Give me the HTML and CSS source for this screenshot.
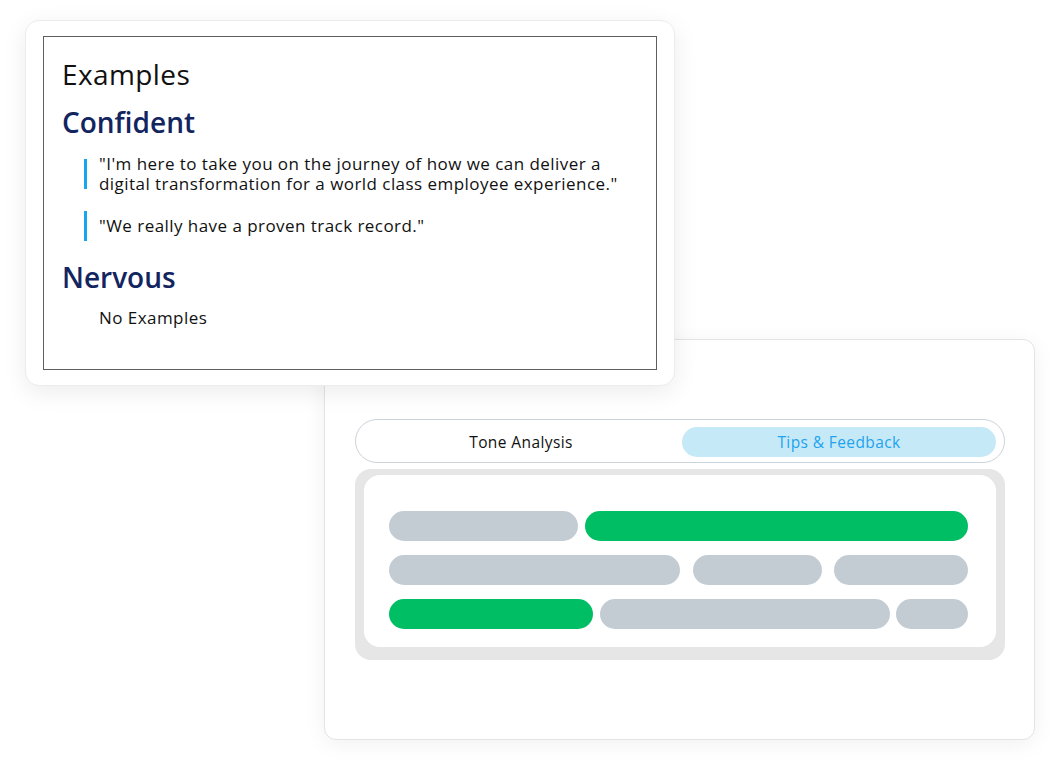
FILE: index.html
```html
<!DOCTYPE html>
<html>
<head>
<meta charset="utf-8">
<link rel="stylesheet" href="styles.css">
</head>
<body>
<div class="canvas">
  <div class="card back">
    <div class="tabs">
      <div class="tab">Tone Analysis</div>
      <div class="tab active">Tips &amp; Feedback</div>
    </div>
    <div class="panel">
      <div class="panel-inner">
        <div class="row">
          <span class="bar grey" style="width:189px"></span>
          <span class="bar green" style="width:383px"></span>
        </div>
        <div class="row">
          <span class="bar grey" style="width:291px"></span>
          <span class="bar grey" style="width:129px"></span>
          <span class="bar grey" style="width:134px"></span>
        </div>
        <div class="row">
          <span class="bar green" style="width:204px"></span>
          <span class="bar grey" style="width:290px"></span>
          <span class="bar grey" style="width:72px"></span>
        </div>
      </div>
    </div>
  </div>
  <div class="card front">
    <div class="box">
      <h1 class="title">Examples</h1>
      <h2 class="cat">Confident</h2>
      <blockquote class="quote"><span class="qtext">"I'm here to take you on the journey of how we can deliver a digital transformation for a world class employee experience."</span></blockquote>
      <blockquote class="quote"><span class="qtext">"We really have a proven track record."</span></blockquote>
      <h2 class="cat nerv">Nervous</h2>
      <p class="none">No Examples</p>
    </div>
  </div>
</div>
</body>
</html>
```

FILE: styles.css
```css
html, body {
  margin: 0;
  padding: 0;
  background: #ffffff;
}
body {
  font-family: "Open Sans", "Noto Sans", sans-serif;
  color: #111;
}
.canvas {
  position: relative;
  width: 1056px;
  height: 764px;
  overflow: hidden;
}
.card {
  position: absolute;
  background: #fff;
  box-sizing: border-box;
}
.front {
  left: 25px;
  top: 20px;
  width: 650px;
  height: 366px;
  border-radius: 14px;
  border: 1px solid #ececec;
  box-shadow: 0 6px 24px rgba(0,0,0,0.08);
  padding: 15px 17px 15px 17px;
}
.back {
  left: 324px;
  top: 339px;
  width: 711px;
  height: 401px;
  border-radius: 12px;
  border: 1px solid #e4e4e4;
  box-shadow: 0 4px 22px rgba(0,0,0,0.06);
  padding: 79px 29px 0 30px;
}
.box {
  border: 1px solid #5e5e5e;
  height: 100%;
  box-sizing: border-box;
  padding: 20px 18px 0 18px;
}
.title {
  margin: 0;
  font-size: 28px;
  font-weight: 400;
  letter-spacing: 0.4px;
  line-height: 34px;
  color: #111;
}
.cat {
  margin: 14px 0 0 0;
  font-size: 28px;
  font-weight: 600;
  line-height: 34px;
  color: #13255f;
}
.cat.nerv {
  margin-top: 19px;
}
.quote {
  display: flex;
  align-items: center;
  margin: 15px 0 0 22px;
  padding: 0;
  min-height: 30px;
  font-size: 17px;
  letter-spacing: 0.45px;
  line-height: 20px;
  color: #111;
  max-width: 555px;
}
.quote::before {
  content: "";
  flex: none;
  width: 3px;
  height: 30px;
  background: #17a5ee;
  margin-right: 12px;
}
.quote + .quote {
  margin-top: 17px;
}
.none {
  margin: 14px 0 0 37px;
  font-size: 17px;
  letter-spacing: 0.45px;
  line-height: 20px;
}
.tabs {
  display: flex;
  border: 1px solid #ccd4db;
  border-radius: 23px;
  height: 44px;
  box-sizing: border-box;
  padding: 7px 8px 5px 8px;
  gap: 4px;
}
.tab {
  flex: 1;
  display: flex;
  align-items: center;
  justify-content: center;
  border-radius: 16px;
  font-size: 15.5px;
  letter-spacing: 0.4px;
  color: #111;
}
.tab.active {
  background: #c6e9f8;
  color: #1ea3ee;
}
.panel {
  margin-top: 6px;
  background: #e6e6e6;
  border-radius: 16px;
  padding: 6px 9px 13px 9px;
}
.panel-inner {
  background: #fff;
  border-radius: 16px;
  padding: 36px 28px 18px 25px;
  display: flex;
  flex-direction: column;
  gap: 14px;
}
.row {
  display: flex;
  justify-content: space-between;
  height: 30px;
}
.bar {
  display: block;
  height: 30px;
  border-radius: 15px;
}
.grey { background: #c4ccd3; }
.green { background: #00be64; }
```
